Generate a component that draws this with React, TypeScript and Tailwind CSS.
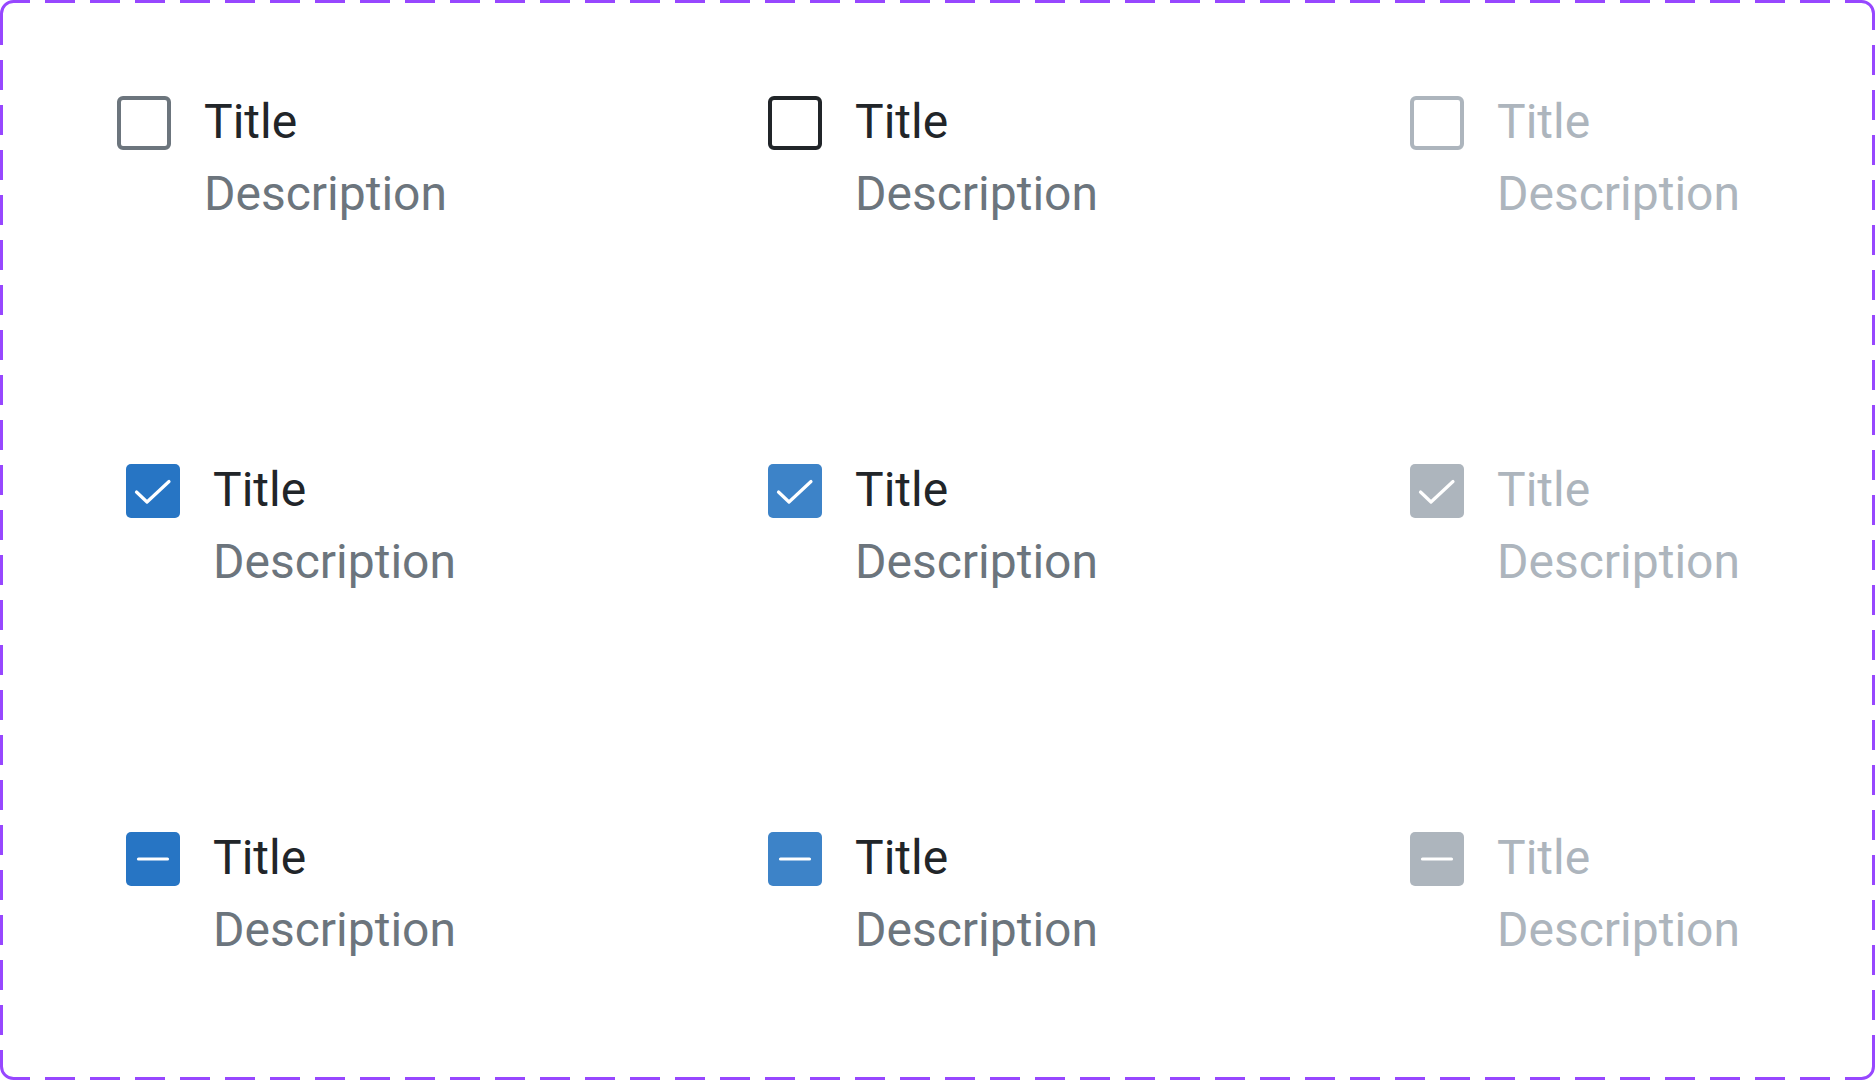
import React from 'react'

type Tone = 'default' | 'hover' | 'disabled'
type State = 'unchecked' | 'checked' | 'indeterminate'

const borderTone: Record<Tone, string> = {
  default: 'border-[#6c757d]',
  hover: 'border-[#212529]',
  disabled: 'border-[#adb5bd]',
}

const fillTone: Record<Tone, string> = {
  default: 'bg-[#2775c4]',
  hover: 'bg-[#3d83c8]',
  disabled: 'bg-[#adb5bd]',
}

const Box = ({ state, tone }: { state: State; tone: Tone }) => {
  if (state === 'unchecked') {
    return <div className={`mt-[11px] w-[54px] h-[54px] shrink-0 rounded-[6px] border-4 bg-white ${borderTone[tone]}`} />
  }
  return (
    <div className={`mt-[11px] w-[54px] h-[54px] shrink-0 rounded-[5px] ${fillTone[tone]}`}>
      <svg width="54" height="54" viewBox="0 0 54 54" fill="none">
        {state === 'checked' ? (
          <path d="M10.5 28 L21 38 L43 17.5" stroke="white" strokeWidth="3.2" strokeLinecap="round" strokeLinejoin="round" />
        ) : (
          <path d="M12.5 27 H41.5" stroke="white" strokeWidth="3.2" strokeLinecap="round" />
        )}
      </svg>
    </div>
  )
}

const Item = ({ state, tone, className = '' }: { state: State; tone: Tone; className?: string }) => {
  const off = tone === 'disabled'
  return (
    <div className={`flex items-start gap-[33px] ${className}`}>
      <Box state={state} tone={tone} />
      <div className="flex flex-col pt-[1px] text-[48px] leading-[72px]">
        <span className={off ? 'text-[#adb5bd]' : 'text-[#212529]'}>Title</span>
        <span className={off ? 'text-[#adb5bd]' : 'text-[#6c757d]'}>Description</span>
      </div>
    </div>
  )
}

const rows: State[] = ['unchecked', 'checked', 'indeterminate']
const tones: Tone[] = ['default', 'hover', 'disabled']

const DashedFrame = () => (
  <svg className="absolute inset-0 pointer-events-none" width="1875" height="1080" viewBox="0 0 1875 1080" fill="none">
    <g stroke="#9747ff" strokeWidth="3">
      {/* solid corners */}
      <path d="M1.5 30 V13.5 A12 12 0 0 1 13.5 1.5 H30" />
      <path d="M1845 1.5 H1861.5 A12 12 0 0 1 1873.5 13.5 V30" />
      <path d="M1873.5 1050 V1066.5 A12 12 0 0 1 1861.5 1078.5 H1845" />
      <path d="M30 1078.5 H13.5 A12 12 0 0 1 1.5 1066.5 V1050" />
      {/* dashed sides */}
      <path d="M30 1.5 H1845" strokeDasharray="30 15" strokeDashoffset="30" />
      <path d="M1873.5 30 V1050" strokeDasharray="30 15" strokeDashoffset="30" />
      <path d="M1845 1078.5 H30" strokeDasharray="30 15" strokeDashoffset="30" />
      <path d="M1.5 1050 V30" strokeDasharray="30 15" strokeDashoffset="30" />
    </g>
  </svg>
)

export default function App() {
  return (
    <div className="relative w-[1875px] h-[1080px] bg-white font-['Roboto','Liberation_Sans',sans-serif] overflow-hidden">
      <div className="flex flex-col gap-[223px] pl-[126px] pt-[85px]">
        {rows.map((state, r) => (
          <div key={state} className="grid grid-cols-[642px_642px_auto]">
            {tones.map((tone, c) => (
              <Item key={tone} state={state} tone={tone} className={r === 0 && c === 0 ? '-ml-[9px]' : ''} />
            ))}
          </div>
        ))}
      </div>
      <DashedFrame />
    </div>
  )
}
